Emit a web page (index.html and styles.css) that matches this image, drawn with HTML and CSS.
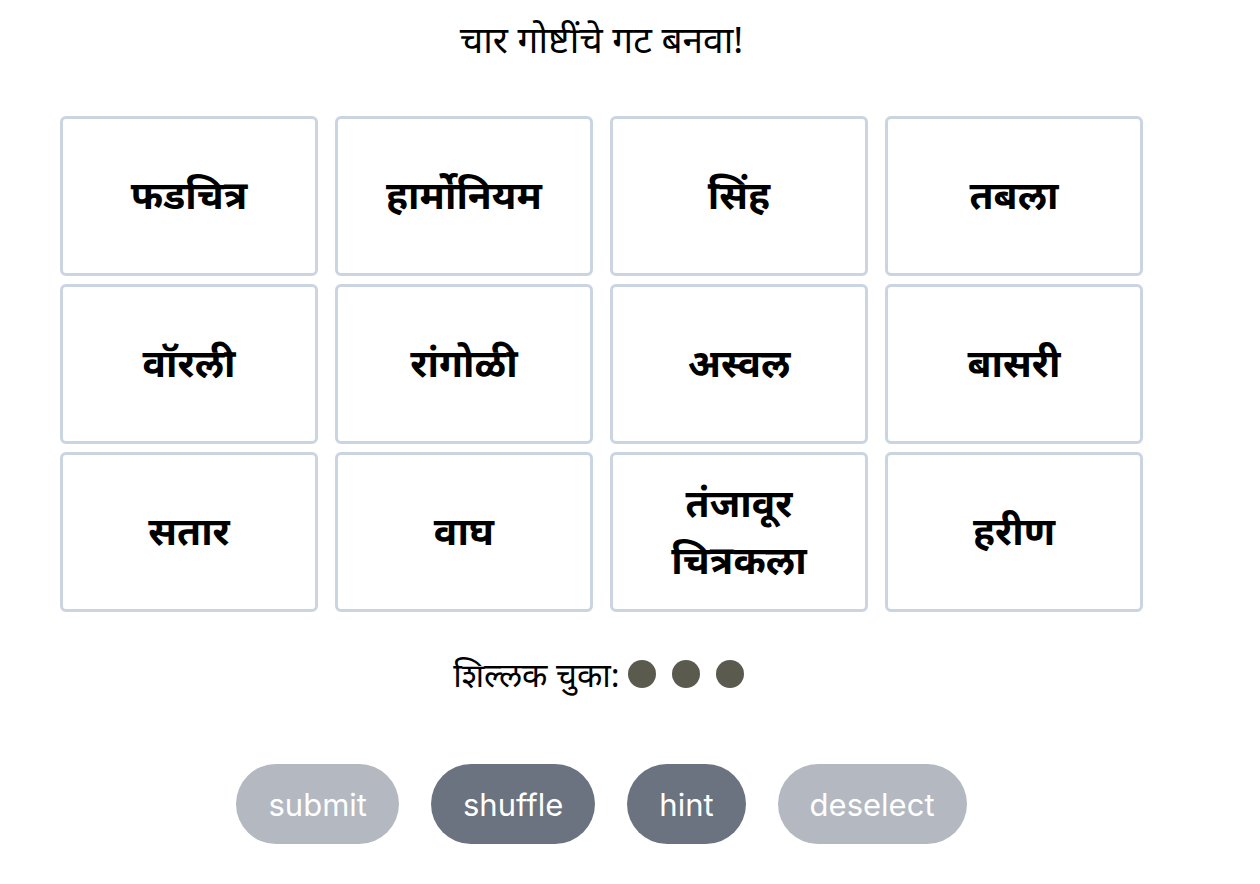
FILE: index.html
```html
<!DOCTYPE html>
<html lang="mr">
<head>
<meta charset="utf-8">
<title>चार गोष्टींचे गट बनवा!</title>
<link rel="stylesheet" href="styles.css">
</head>
<body>
<main class="game">
  <h1 class="title">चार गोष्टींचे गट बनवा!</h1>
  <div class="grid">
    <div class="card">फडचित्र</div>
    <div class="card">हार्मोनियम</div>
    <div class="card">सिंह</div>
    <div class="card">तबला</div>
    <div class="card">वॉरली</div>
    <div class="card">रांगोळी</div>
    <div class="card">अस्वल</div>
    <div class="card">बासरी</div>
    <div class="card">सतार</div>
    <div class="card">वाघ</div>
    <div class="card">तंजावूर<br>चित्रकला</div>
    <div class="card">हरीण</div>
  </div>
  <div class="lives">
    <span class="lives-label">शिल्लक चुका:</span>
    <span class="dot"></span>
    <span class="dot"></span>
    <span class="dot"></span>
  </div>
  <div class="actions">
    <button class="btn btn-disabled">submit</button>
    <button class="btn btn-active">shuffle</button>
    <button class="btn btn-active">hint</button>
    <button class="btn btn-disabled">deselect</button>
  </div>
</main>
</body>
</html>
```

FILE: styles.css
```css
html, body {
  margin: 0;
  padding: 0;
  background: #ffffff;
}

body {
  font-family: "Noto Sans", "Noto Sans Devanagari", "Liberation Sans", sans-serif;
  color: #000000;
}

.game {
  width: 1203px;
  display: flex;
  flex-direction: column;
  align-items: center;
}

.title {
  margin: 0;
  padding-top: 18px;
  font-size: 37px;
  font-weight: 400;
  line-height: 42px;
}

.grid {
  margin-top: 56px;
  width: 1083px;
  display: grid;
  grid-template-columns: repeat(4, 1fr);
  grid-auto-rows: 160px;
  column-gap: 17px;
  row-gap: 8px;
}

.card {
  box-sizing: border-box;
  border: 3px solid #cbd5e1;
  border-radius: 6px;
  padding-bottom: 5px;
  display: flex;
  align-items: center;
  justify-content: center;
  text-align: center;
  font-size: 39px;
  font-weight: 700;
  line-height: 57px;
}

.lives {
  margin-top: 42px;
  height: 40px;
  padding-right: 6px;
  display: flex;
  align-items: center;
  gap: 16px;
  font-size: 33px;
}

.lives-label {
  margin-right: -8px;
}

.dot {
  width: 28px;
  height: 28px;
  border-radius: 50%;
  background: #5a5a4e;
}

.actions {
  margin-top: 70px;
  display: flex;
  gap: 32px;
}

.btn {
  height: 80px;
  padding: 0 32px;
  border: none;
  border-radius: 40px;
  font-family: Inter, "Liberation Sans", sans-serif;
  font-size: 31px;
  color: #ffffff;
}

.btn-disabled {
  background: #b3b8c1;
}

.btn-active {
  background: #6b7280;
}
```
